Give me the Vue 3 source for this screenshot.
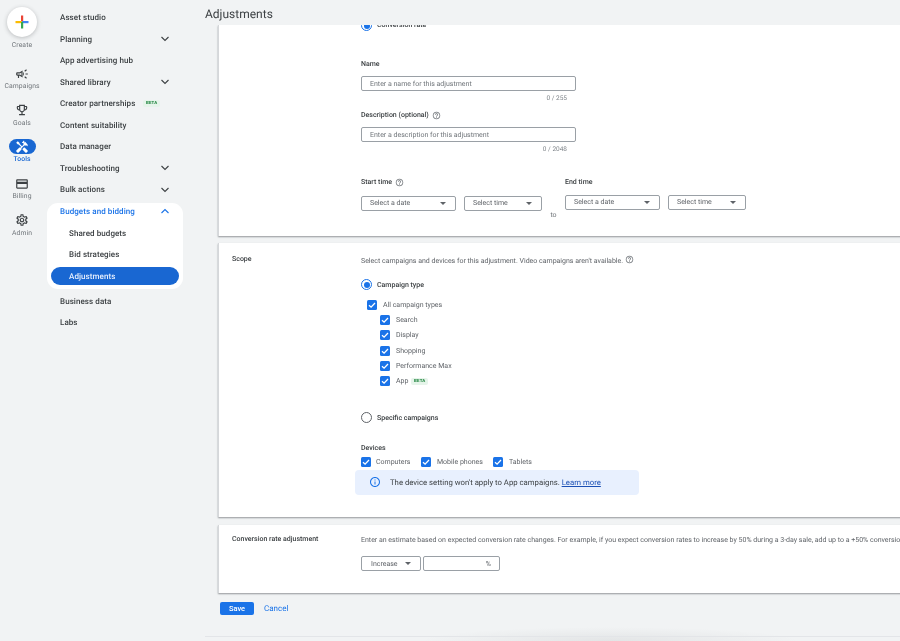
<script setup>
const paths = {
  campaign: 'M18 11v2h4v-2h-4zm-2 6.61c.96.71 2.21 1.65 3.2 2.39.4-.53.8-1.07 1.2-1.6-.99-.74-2.24-1.68-3.2-2.4-.4.54-.8 1.08-1.2 1.61zM20.4 5.6c-.4-.53-.8-1.07-1.2-1.6-.99.74-2.24 1.68-3.2 2.4.4.53.8 1.07 1.2 1.6.96-.72 2.21-1.65 3.2-2.4zM4 9c-1.1 0-2 .9-2 2v2c0 1.1.9 2 2 2h1v4h2v-4h1l5 3V6L8 9H4zm5.03 1.71L11 9.53v4.94l-1.97-1.18-.48-.29H4v-2h4.55l.48-.29zM15.5 12c0-1.33-.58-2.53-1.5-3.35v6.69c.92-.81 1.5-2.01 1.5-3.34z',
  goals: 'M19 5h-2V3H7v2H5c-1.1 0-2 .9-2 2v1c0 2.55 1.92 4.63 4.39 4.94.63 1.5 1.98 2.63 3.61 2.96V19H7v2h10v-2h-4v-3.1c1.63-.33 2.98-1.46 3.61-2.96C19.08 12.63 21 10.55 21 8V7c0-1.1-.9-2-2-2zM5 8V7h2v3.82C5.84 10.4 5 9.3 5 8zm7 6c-1.65 0-3-1.35-3-3V5h6v6c0 1.65-1.35 3-3 3zm7-6c0 1.3-.84 2.4-2 2.82V7h2v1z',
  tools: 'M21.67 18.17l-5.3-5.3h-.99l-2.54 2.54v.99l5.3 5.3c.39.39 1.02.39 1.41 0l2.12-2.12c.39-.38.39-1.02 0-1.41zM17.34 10.19l1.41-1.41 2.12 2.12c1.17-1.17 1.17-3.07 0-4.24l-3.54-3.54-1.41 1.41V1.71l-.7-.71-3.54 3.54.71.71h2.83l-1.41 1.41 1.06 1.06-2.89 2.89-4.13-4.13V5.06L4.83 2.04 2 4.87l3.03 3.03h1.41l4.13 4.13-.85.85H7.6l-5.3 5.3c-.39.39-.39 1.02 0 1.41l2.12 2.12c.39.39 1.02.39 1.41 0l5.3-5.3v-2.12l5.15-5.15 1.06 1.05z',
  billing: 'M20 4H4c-1.11 0-1.99.89-1.99 2L2 18c0 1.11.89 2 2 2h16c1.11 0 2-.89 2-2V6c0-1.11-.89-2-2-2zm0 14H4v-6h16v6zm0-10H4V6h16v2z',
  admin: 'M19.43 12.98c.04-.32.07-.64.07-.98 0-.34-.03-.66-.07-.98l2.11-1.65c.19-.15.24-.42.12-.64l-2-3.46c-.09-.16-.26-.25-.44-.25-.06 0-.12.01-.17.03l-2.49 1c-.52-.4-1.08-.73-1.69-.98l-.38-2.65C14.46 2.18 14.25 2 14 2h-4c-.25 0-.46.18-.49.42l-.38 2.65c-.61.25-1.17.59-1.69.98l-2.49-1c-.06-.02-.12-.03-.18-.03-.17 0-.34.09-.43.25l-2 3.46c-.13.22-.07.49.12.64l2.11 1.65c-.04.32-.07.65-.07.98 0 .33.03.66.07.98l-2.11 1.65c-.19.15-.24.42-.12.64l2 3.46c.09.16.26.25.44.25.06 0 .12-.01.17-.03l2.49-1c.52.4 1.08.73 1.69.98l.38 2.65c.03.24.24.42.49.42h4c.25 0 .46-.18.49-.42l.38-2.65c.61-.25 1.17-.59 1.69-.98l2.49 1c.06.02.12.03.18.03.17 0 .34-.09.43-.25l2-3.46c.12-.22.07-.49-.12-.64l-2.11-1.65zm-1.98-1.71c.04.31.05.52.05.73 0 .21-.02.43-.05.73l-.14 1.13.89.7 1.08.84-.7 1.21-1.27-.51-1.04-.42-.9.68c-.43.32-.84.56-1.25.73l-1.06.43-.16 1.13-.2 1.35h-1.4l-.19-1.35-.16-1.13-1.06-.43c-.43-.18-.83-.41-1.23-.71l-.91-.7-1.06.43-1.27.51-.7-1.21 1.08-.84.89-.7-.14-1.13c-.03-.31-.05-.54-.05-.74s.02-.43.05-.73l.14-1.13-.89-.7-1.08-.84.7-1.21 1.27.51 1.04.42.9-.68c.43-.32.84-.56 1.25-.73l1.06-.43.16-1.13.2-1.35h1.39l.19 1.35.16 1.13 1.06.43c.43.18.83.41 1.23.71l.91.7 1.06-.43 1.27-.51.7 1.21-1.07.85-.89.7.14 1.13zM12 8c-2.21 0-4 1.79-4 4s1.79 4 4 4 4-1.79 4-4-1.79-4-4-4zm0 6c-1.1 0-2-.9-2-2s.9-2 2-2 2 .9 2 2-.9 2-2 2z',
}
const help = 'M11 18h2v-2h-2v2zm1-16C6.48 2 2 6.48 2 12s4.48 10 10 10 10-4.48 10-10S17.52 2 12 2zm0 18c-4.41 0-8-3.59-8-8s3.59-8 8-8 8 3.59 8 8-3.59 8-8 8zm0-14c-2.21 0-4 1.79-4 4h2c0-1.1.9-2 2-2s2 .9 2 2c0 2-3 1.75-3 5h2c0-2.25 3-2.5 3-5 0-2.21-1.79-4-4-4z'
const info = 'M11 7h2v2h-2zm0 4h2v6h-2zm1-9C6.48 2 2 6.48 2 12s4.48 10 10 10 10-4.48 10-10S17.52 2 12 2zm0 18c-4.41 0-8-3.59-8-8s3.59-8 8-8 8 3.59 8 8-3.59 8-8 8z'

const rail = [
  { key: 'campaign', label: 'Campaigns' },
  { key: 'goals', label: 'Goals' },
  { key: 'tools', label: 'Tools', active: true },
  { key: 'billing', label: 'Billing' },
  { key: 'admin', label: 'Admin' },
]
const navTop = [
  { t: 'Asset studio' },
  { t: 'Planning', chev: true },
  { t: 'App advertising hub' },
  { t: 'Shared library', chev: true },
  { t: 'Creator partnerships', beta: true },
  { t: 'Content suitability' },
  { t: 'Data manager' },
  { t: 'Troubleshooting', chev: true },
  { t: 'Bulk actions', chev: true },
]
const campaignTypes = ['Search', 'Display', 'Shopping', 'Performance Max', 'App']
const devices = ['Computers', 'Mobile phones', 'Tablets']
</script>

<template>
  <div class="page">
    <aside class="rail">
      <div class="create">
        <div class="fab">
          <svg width="14" height="14" viewBox="0 0 14 14">
            <rect x="6" y="0.5" width="2.2" height="6.5" fill="#ea4335" />
            <rect x="0.5" y="6" width="6.5" height="2.2" fill="#fbbc04" />
            <rect x="7" y="6" width="6.5" height="2.2" fill="#4285f4" />
            <rect x="6" y="7" width="2.2" height="6.5" fill="#34a853" />
          </svg>
        </div>
        <span class="rail-label">Create</span>
      </div>
      <div v-for="r in rail" :key="r.key" class="rail-item" :class="{ active: r.active }">
        <div class="rail-icon">
          <svg width="14" height="14" viewBox="0 0 24 24"><path :d="paths[r.key]" /></svg>
        </div>
        <span class="rail-label">{{ r.label }}</span>
      </div>
    </aside>

    <nav class="nav">
      <div v-for="n in navTop" :key="n.t" class="nav-row">
        <span>{{ n.t }}</span>
        <span v-if="n.beta" class="beta">BETA</span>
        <svg v-if="n.chev" class="chev" width="10" height="6" viewBox="0 0 10 6"><path d="M1.5 1l3.5 3.5L8.5 1" fill="none" stroke="currentColor" stroke-width="1.1" /></svg>
      </div>
      <div class="group">
        <div class="nav-row open">
          <span>Budgets and bidding</span>
          <svg class="chev" width="10" height="6" viewBox="0 0 10 6"><path d="M1.5 5L5 1.5 8.5 5" fill="none" stroke="currentColor" stroke-width="1.1" /></svg>
        </div>
        <div class="nav-row sub">Shared budgets</div>
        <div class="nav-row sub">Bid strategies</div>
        <div class="nav-row sub current">Adjustments</div>
      </div>
      <div class="nav-row">Business data</div>
      <div class="nav-row">Labs</div>
    </nav>

    <main class="main">
      <header class="title">Adjustments</header>
      <div class="scroll">
        <section class="card card-general">
          <div></div>
          <div class="col">
            <div class="radio-row clipped">
              <span class="radio on"></span>
              <span class="strong">Conversion rate</span>
            </div>
            <label class="strong field-label">Name</label>
            <div class="input wide">Enter a name for this adjustment</div>
            <div class="counter">0 / 255</div>
            <label class="strong field-label second">Description (optional)
              <svg class="help" width="9" height="9" viewBox="0 0 24 24"><path :d="help" /></svg>
            </label>
            <div class="input wide">Enter a description for this adjustment</div>
            <div class="counter">0 / 2048</div>
            <div class="times">
              <div class="time-col">
                <label class="strong field-label">Start time
                  <svg class="help" width="9" height="9" viewBox="0 0 24 24"><path :d="help" /></svg>
                </label>
                <div class="select-row">
                  <div class="select date"><span>Select a date</span><i class="caret"></i></div>
                  <div class="select time"><span>Select time</span><i class="caret"></i></div>
                </div>
              </div>
              <span class="to">to</span>
              <div class="time-col">
                <label class="strong field-label">End time</label>
                <div class="select-row up">
                  <div class="select date"><span>Select a date</span><i class="caret"></i></div>
                  <div class="select time"><span>Select time</span><i class="caret"></i></div>
                </div>
              </div>
            </div>
          </div>
        </section>

        <section class="card card-scope">
          <div class="strong side">Scope</div>
          <div class="col">
            <div class="desc">Select campaigns and devices for this adjustment. Video campaigns aren't available.
              <svg class="help" width="9" height="9" viewBox="0 0 24 24"><path :d="help" /></svg>
            </div>
            <div class="radio-row type">
              <span class="radio on"></span>
              <span class="strong">Campaign type</span>
            </div>
            <div class="check-row all">
              <span class="check"><svg width="10" height="10" viewBox="0 0 10 10"><path d="M2 5.2l2.1 2L8 3" fill="none" stroke="#fff" stroke-width="1.3" /></svg></span>
              <span>All campaign types</span>
            </div>
            <div class="children">
              <div v-for="c in campaignTypes" :key="c" class="check-row">
                <span class="check"><svg width="10" height="10" viewBox="0 0 10 10"><path d="M2 5.2l2.1 2L8 3" fill="none" stroke="#fff" stroke-width="1.3" /></svg></span>
                <span>{{ c }}</span>
                <span v-if="c === 'App'" class="beta small">BETA</span>
              </div>
            </div>
            <div class="radio-row specific">
              <span class="radio"></span>
              <span class="strong">Specific campaigns</span>
            </div>
            <div class="strong devices-label">Devices</div>
            <div class="devices">
              <div v-for="d in devices" :key="d" class="check-row">
                <span class="check"><svg width="10" height="10" viewBox="0 0 10 10"><path d="M2 5.2l2.1 2L8 3" fill="none" stroke="#fff" stroke-width="1.3" /></svg></span>
                <span>{{ d }}</span>
              </div>
            </div>
            <div class="banner">
              <svg width="12" height="12" viewBox="0 0 24 24"><path :d="info" fill="#1a73e8" /></svg>
              <span>The device setting won't apply to App campaigns. <a class="learn">Learn more</a></span>
            </div>
          </div>
        </section>

        <section class="card card-rate">
          <div class="strong side">Conversion rate adjustment</div>
          <div class="col clip">
            <div class="desc nowrap">Enter an estimate based on expected conversion rate changes. For example, if you expect conversion rates to increase by 50% during a 3-day sale, add up to a +50% conversion rate adjustment.</div>
            <div class="rate-row">
              <div class="select inc"><span>Increase</span><i class="caret"></i></div>
              <div class="select pct"><span>%</span></div>
            </div>
          </div>
        </section>

        <div class="actions">
          <button class="save">Save</button>
          <a class="cancel">Cancel</a>
        </div>
      </div>
      <footer class="foot"></footer>
    </main>
  </div>
</template>

<style>
body { margin: 0; background: #f1f3f4; }
</style>

<style scoped>
.page {
  width: 900px;
  height: 641px;
  display: flex;
  overflow: hidden;
  background: #f1f3f4;
  font-family: Roboto, "Liberation Sans", sans-serif;
  font-size: 7px;
  color: #5f6368;
  text-rendering: geometricPrecision;
  filter: blur(0.3px);
}
.rail {
  width: 44px;
  flex: none;
  display: flex;
  flex-direction: column;
  align-items: center;
  padding-top: 7px;
  box-sizing: border-box;
}
.create { display: flex; flex-direction: column; align-items: center; margin-bottom: 16px; }
.fab {
  width: 30px;
  height: 30px;
  border-radius: 50%;
  background: #fff;
  box-shadow: 0 1px 4px rgba(60, 64, 67, 0.3);
  display: flex;
  align-items: center;
  justify-content: center;
  margin-bottom: 4px;
}
.rail-item {
  display: flex;
  flex-direction: column;
  align-items: center;
  height: 36.7px;
}
.rail-icon {
  width: 27px;
  height: 15px;
  border-radius: 8px;
  display: flex;
  align-items: center;
  justify-content: center;
  margin-bottom: 1px;
}
.rail-icon svg { fill: #3c4043; }
.rail-label { font-size: 6.8px; line-height: 9px; font-weight: 400; color: #70757a; letter-spacing: 0.1px; }
.rail-item.active .rail-icon { background: #1967d2; }
.rail-item.active .rail-icon svg { fill: #fff; }
.rail-item.active .rail-label { color: #1967d2; font-weight: 500; }

.nav {
  width: 136px;
  margin-left: 3px;
  flex: none;
  padding-top: 7px;
  display: flex;
  flex-direction: column;
}
.nav-row {
  height: 21.5px;
  display: flex;
  align-items: center;
  padding-left: 13px;
  padding-right: 13px;
  font-size: 8px;
  font-weight: 500;
  color: #3c4043;
  box-sizing: border-box;
  flex: none;
  letter-spacing: 0.08px;
  width: 136px;
}
.chev { margin-left: auto; color: #3c4043; }
.beta {
  margin-left: 8px;
  padding: 1px 2.5px;
  background: #e6f4ea;
  color: #188038;
  font-size: 4.4px;
  font-weight: 700;
  letter-spacing: 0.2px;
  border-radius: 2px;
}
.beta.small { margin-left: -3px; }
.group {
  width: 136px;
  height: 86px;
  background: #fff;
  border-radius: 11px;
  margin-top: 2.5px;
  margin-bottom: 1.5px;
  box-sizing: border-box;
  flex: none;
}
.nav-row.open { color: #1a73e8; height: 16px; margin-bottom: 3.25px; }
.nav-row.open .chev { color: #1a73e8; }
.nav-row.sub { padding-left: 22px; }
.nav-row.current {
  width: 128px;
  height: 18px;
  margin: 1.75px 0 0 4px;
  padding-left: 18px;
  border-radius: 9px;
  background: #1967d2;
  color: #e8f0fe;
}

.main {
  flex: 1;
  min-width: 0;
  height: 641px;
  display: flex;
  flex-direction: column;
  position: relative;
}
.title {
  height: 25px;
  flex: none;
  padding: 6px 0 0 22px;
  box-sizing: border-box;
  font-size: 12px;
  color: #3c4043;
  line-height: 16px;
  position: relative;
  z-index: 2;
  background: #f1f3f4;
}
.scroll {
  flex: 1;
  min-height: 0;
  overflow: hidden;
  padding-left: 35px;
  display: flex;
  flex-direction: column;
}
.card {
  flex: none;
  background: #fff;
  box-shadow: 0 1px 1.5px rgba(60, 64, 67, 0.5);
  display: grid;
  grid-template-columns: 142px 1fr;
  width: 720px;
  box-sizing: border-box;
  border-left: 1px solid #d5d7da;
}
.col { min-width: 0; display: flex; flex-direction: column; align-items: flex-start; }
.side { padding-left: 13px; }
.strong { font-weight: 500; color: #3c4043; }

.card-general { height: 211px; margin-bottom: 7px; }
.radio-row { display: flex; align-items: center; gap: 5px; }
.radio-row.clipped { margin-top: -5px; height: 12px; margin-bottom: 27px; align-items: flex-start; }
.radio-row.clipped .strong { margin-top: 0.5px; }
.radio {
  width: 11px;
  height: 11px;
  border-radius: 50%;
  border: 1.2px solid #5f6368;
  box-sizing: border-box;
  position: relative;
  flex: none;
  background: #fff;
}
.radio.on { border-color: #1a73e8; }
.radio.on::after {
  content: "";
  position: absolute;
  inset: 1.5px;
  border-radius: 50%;
  background: #1a73e8;
}
.field-label { display: flex; align-items: center; gap: 3px; line-height: 10px; }
.help { fill: #70757a; }
.desc .help { vertical-align: -1.5px; margin-left: 0; }
.input {
  margin-top: 7px;
  height: 15px;
  border: 1px solid #9aa0a6;
  border-radius: 2px;
  box-sizing: border-box;
  padding-left: 8px;
  display: flex;
  align-items: center;
  color: #70757a;
  font-size: 7px;
}
.wide { width: 215px; }
.counter {
  width: 206px;
  text-align: right;
  color: #80868b;
  font-size: 6.5px;
  line-height: 8px;
  margin-top: 2.5px;
}
.second { margin-top: 8.5px; }
.times { display: flex; align-items: flex-start; margin-top: 24.5px; }
.time-col { display: flex; flex-direction: column; gap: 9px; }
.select-row { display: flex; gap: 8px; }
.select-row.up { margin-top: -1px; }
.select {
  height: 14.5px;
  border: 1px solid #9aa0a6;
  border-radius: 2px;
  box-sizing: border-box;
  padding: 0 8px;
  display: flex;
  align-items: center;
  justify-content: space-between;
  color: #5f6368;
  font-size: 7px;
  background: #fff;
}
.date { width: 95px; }
.time { width: 78px; }
.caret {
  width: 0;
  height: 0;
  border-left: 3px solid transparent;
  border-right: 3px solid transparent;
  border-top: 3px solid #5f6368;
  margin-right: 1px;
}
.to { width: 23px; text-align: center; margin-top: 29px; color: #70757a; font-size: 7px; padding-top: 5px; }

.card-scope { height: 274px; margin-bottom: 8px; padding-top: 12px; }
.desc { line-height: 10px; }
.nowrap { white-space: nowrap; }
.radio-row.type { margin-top: 13px; height: 12px; }
.check-row { display: flex; align-items: center; height: 15.2px; gap: 6px; color: #5f6368; }
.check {
  width: 10px;
  height: 10px;
  border-radius: 1.5px;
  background: #1a73e8;
  display: flex;
  flex: none;
}
.all { margin: 7px 0 0 6px; color: #5f6368; }
.children { margin-left: 19px; }
.radio-row.specific { margin-top: 23px; height: 12px; }
.devices-label { margin-top: 19px; line-height: 10px; }
.devices { display: flex; margin-top: 2px; }
.devices .check-row:nth-child(1) { width: 60px; gap: 5px; }
.devices .check-row:nth-child(2) { width: 72px; gap: 6px; }
.check-row span:last-child { white-space: nowrap; }
.banner {
  margin: 0 0 0 -6px;
  width: 284px;
  height: 25px;
  box-sizing: border-box;
  background: #e8f0fe;
  border-radius: 4px;
  display: flex;
  align-items: center;
  gap: 9px;
  padding-left: 14px;
  font-size: 7.75px;
  color: #3c4043;
}
.learn { color: #1a4fb4; text-decoration: underline; }

.card-rate { height: 68px; padding-top: 10px; }
.clip { overflow: hidden; width: 539px; }
.rate-row { display: flex; gap: 2px; margin-top: 11px; }
.rate-row .select { height: 15px; }
.inc { width: 60px; padding-left: 9px; }
.pct { width: 77px; justify-content: flex-end; padding-right: 8px; }

.actions { display: flex; align-items: center; gap: 10px; margin: 9px 0 0 2px; flex: none; }
.save {
  width: 34px;
  height: 13px;
  background: #1a73e8;
  color: #fff;
  border: 0;
  border-radius: 2px;
  font: 500 7.5px Roboto, sans-serif;
  padding: 0;
}
.cancel { color: #1a73e8; font-weight: 400; font-size: 8px; }

.foot {
  position: absolute;
  left: 22px;
  right: 0;
  top: 626px;
  height: 15px;
  background:
    linear-gradient(#e3e5e8, #e3e5e8) 0 10px / 100% 1px no-repeat,
    radial-gradient(ellipse 190px 14px at 405px 15px, rgba(60, 64, 67, 0.08), transparent);
}
</style>
